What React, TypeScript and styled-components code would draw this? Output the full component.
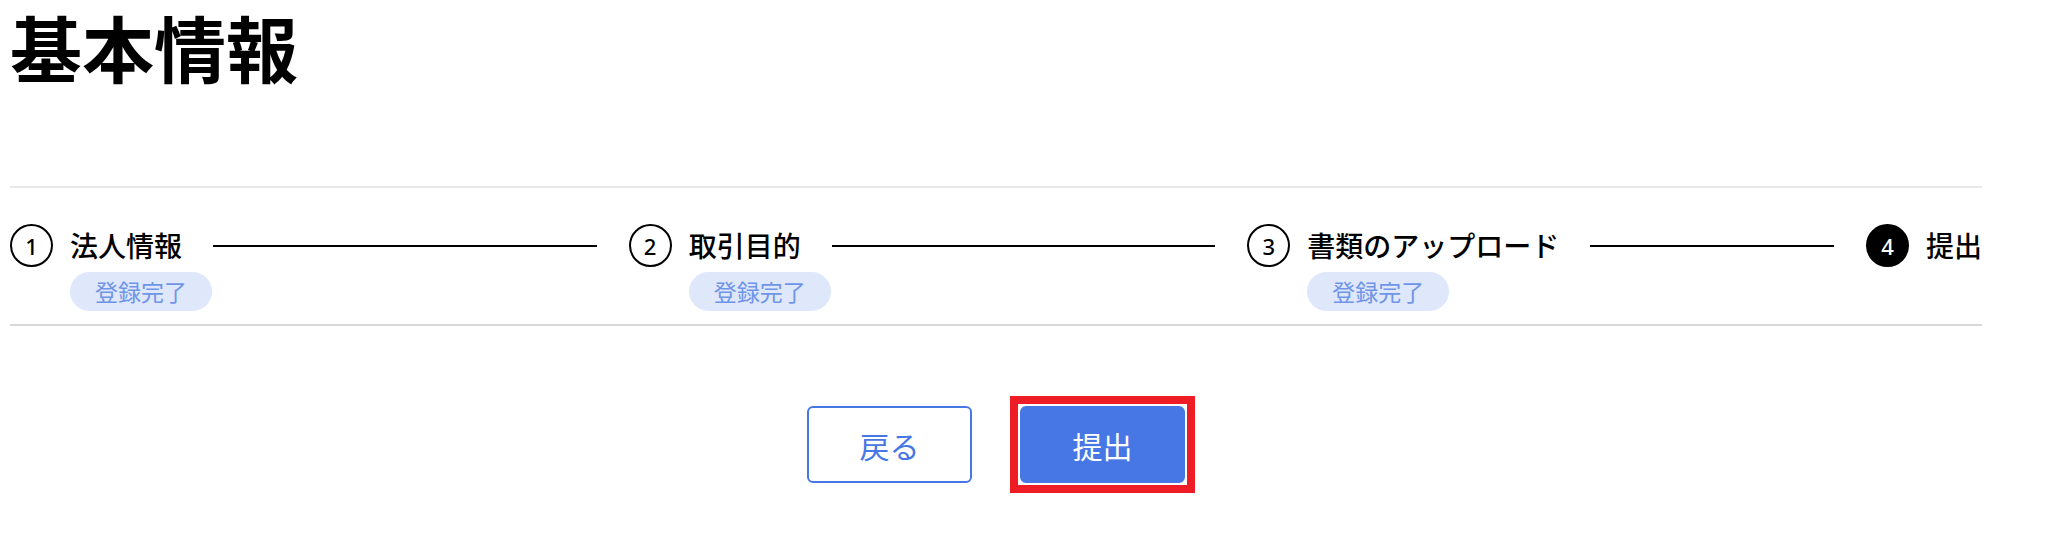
import React from 'react';
import styled, { createGlobalStyle } from 'styled-components';

const GlobalStyle = createGlobalStyle`
  body {
    margin: 0;
    background: #ffffff;
    font-family: "Noto Sans CJK JP", "Noto Sans", sans-serif;
    color: #000000;
  }
`;

const Page = styled.div`
  width: 1972px;
  padding: 0 10px 40px;
`;

const Title = styled.h1`
  margin: 0;
  font-size: 72px;
  font-weight: 700;
  line-height: 1.28;
`;

const Stepper = styled.div`
  display: flex;
  margin-top: 94px;
  padding: 36px 0 13px;
  border-top: 2px solid #e8e8e8;
  border-bottom: 2px solid #d9d9d9;
`;

const Step = styled.div<{ $last?: boolean }>`
  display: flex;
  flex-direction: column;
  align-items: flex-start;
  flex: ${({ $last }) => ($last ? '0 0 auto' : '1 1 0')};
`;

const StepHeader = styled.div`
  display: flex;
  align-items: center;
  align-self: stretch;
  gap: 17px;
  height: 43px;
`;

const Circle = styled.div<{ $active?: boolean }>`
  box-sizing: border-box;
  flex: none;
  width: 43px;
  height: 43px;
  border-radius: 50%;
  border: 2px solid #000000;
  background: ${({ $active }) => ($active ? '#000000' : '#ffffff')};
  color: ${({ $active }) => ($active ? '#ffffff' : '#000000')};
  display: flex;
  align-items: center;
  justify-content: center;
  font-family: "Noto Sans", sans-serif;
  font-size: 22px;
  font-weight: 500;
`;

const StepLabel = styled.span`
  font-size: 28px;
  font-weight: 500;
  line-height: 1.3;
  white-space: nowrap;
`;

const Connector = styled.div`
  flex: 1;
  height: 2px;
  margin: 0 32px 0 14px;
  background: #000000;
`;

const Badge = styled.span`
  margin: 5px 0 0 60px;
  height: 39px;
  padding: 0 25px;
  border-radius: 20px;
  background: #dfe7fa;
  color: #6f95e8;
  font-size: 23px;
  line-height: 39px;
  white-space: nowrap;
`;

const Actions = styled.div`
  display: flex;
  justify-content: center;
  align-items: center;
  gap: 48px;
  margin-top: 80px;
`;

// red review frame drawn around the submit button; it does not take up layout space
const Highlight = styled.div`
  display: flex;
  margin: -10px;
  padding: 2px;
  border: 8px solid #ee1c25;
`;

const Button = styled.button<{ $primary?: boolean }>`
  box-sizing: border-box;
  width: 165px;
  height: 77px;
  border-radius: 6px;
  border: 2px solid #4777e4;
  background: ${({ $primary }) => ($primary ? '#4777e4' : '#ffffff')};
  color: ${({ $primary }) => ($primary ? '#ffffff' : '#4777e4')};
  font-family: "Noto Sans CJK JP", sans-serif;
  font-size: 30px;
  cursor: pointer;
`;

const steps = [
  { no: 1, label: '法人情報', done: true },
  { no: 2, label: '取引目的', done: true },
  { no: 3, label: '書類のアップロード', done: true },
  { no: 4, label: '提出', done: false },
];

export default function App() {
  return (
    <Page>
      <GlobalStyle />
      <Title>基本情報</Title>
      <Stepper>
        {steps.map((s, i) => {
          const last = i === steps.length - 1;
          return (
            <Step key={s.no} $last={last}>
              <StepHeader>
                <Circle $active={last}>{s.no}</Circle>
                <StepLabel>{s.label}</StepLabel>
                {!last && <Connector />}
              </StepHeader>
              {s.done && <Badge>登録完了</Badge>}
            </Step>
          );
        })}
      </Stepper>
      <Actions>
        <Button>戻る</Button>
        <Highlight>
          <Button $primary>提出</Button>
        </Highlight>
      </Actions>
    </Page>
  );
}
